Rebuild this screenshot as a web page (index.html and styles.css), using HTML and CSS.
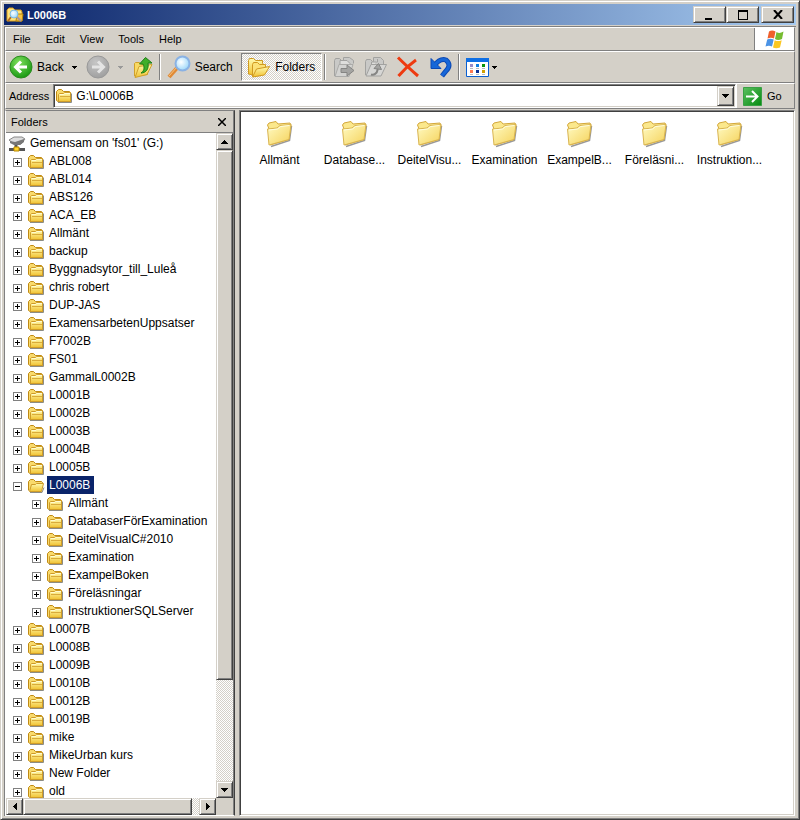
FILE: index.html
```html
<!DOCTYPE html>
<html lang="en">
<head>
    <meta charset="UTF-8">
    <meta name="viewport" content="width=device-width, initial-scale=1.0">
    <title>L0006B</title>
    <link rel="stylesheet" href="styles.css">
</head>
<body>
    <!-- Shared icons -->
    <svg class="defs" aria-hidden="true">
        <defs>
            <linearGradient id="gold" x1="0" y1="0" x2="0" y2="1">
                <stop offset="0" stop-color="#fffbb0"/>
                <stop offset="1" stop-color="#f1c232"/>
            </linearGradient>
            <linearGradient id="goldBig" x1="0" y1="0" x2="1" y2="1">
                <stop offset="0" stop-color="#fffbc4"/>
                <stop offset="1" stop-color="#f5d25a"/>
            </linearGradient>
            <radialGradient id="green" cx="0.4" cy="0.3" r="0.7">
                <stop offset="0" stop-color="#7fe05c"/>
                <stop offset="1" stop-color="#1b9a14"/>
            </radialGradient>
            <linearGradient id="goGreen" x1="0" y1="0" x2="1" y2="1">
                <stop offset="0" stop-color="#5cc060"/>
                <stop offset="1" stop-color="#068a10"/>
            </linearGradient>
            <radialGradient id="grey" cx="0.4" cy="0.3" r="0.7">
                <stop offset="0" stop-color="#c6c6c6"/>
                <stop offset="1" stop-color="#a0a0a0"/>
            </radialGradient>
            <radialGradient id="lens" cx="0.4" cy="0.4" r="0.6">
                <stop offset="0" stop-color="#ffffff"/>
                <stop offset="1" stop-color="#9ed8fa"/>
            </radialGradient>
        </defs>
        <symbol id="folder" viewBox="0 0 17 14">
            <path d="M2 13.500h13.500V4.500" fill="none" stroke="#8c8c84"/>
            <path d="M.5 11.500v-9l2-2h3l2 2h6l1 1v9h-12.500z" fill="#f9da6c" stroke="#c08a14"/>
            <path d="M2.500 12.500v-7l1-1h4l1-1h6v9z" fill="url(#gold)" stroke="#cf9c28"/>
            <path d="M4 7.500h10" stroke="#d9ab3a"/>
            <path d="M4 5.500h4l1-1h5" fill="none" stroke="#fffbd0"/>
        </symbol>
        <symbol id="open" viewBox="0 0 17 14">
            <path d="M2 13.500h12l2-5" fill="none" stroke="#8c8c84"/>
            <path d="M.5 11.500v-9l2-2h3l2 2h6l1 1v3" fill="#f9da6c" stroke="#c08a14"/>
            <path d="M1.500 12.500l2-7h4l1-1h7l-2 8z" fill="url(#gold)" stroke="#cf9c28"/>
        </symbol>
        <symbol id="bigFolder" viewBox="0 0 27 28">
            <path d="M5 26.500L23.500 20.500L25.500 6" fill="none" stroke="#999" stroke-width="1.500"/>
            <path d="M3 9L1.500 5L3 3L10 1.500L12 4L24 3L25 5L23 19.500L4 25z" fill="#fbe88d" stroke="#d3a73b"/>
            <path d="M1.500 9L11 8L14 5.500L25 4.500L23 19.500L3 25z" fill="url(#goldBig)" stroke="#d9b44f"/>
            <path d="M3 10L11.500 9L14.500 6.500L23.500 5.500" fill="none" stroke="#fffde0"/>
        </symbol>
        <symbol id="down" viewBox="0 0 7 4">
            <path d="M0 0h7v1h-1v1h-1v1h-1v1h-1v-1h-1v-1h-1v-1h-1z" fill="currentColor"/>
        </symbol>
        <symbol id="smallDown" viewBox="0 0 5 3">
            <path d="M0 0h5v1h-1v1h-1v1h-1v-1h-1v-1h-1z" fill="currentColor"/>
        </symbol>
        <symbol id="docArrow" viewBox="0 0 22 22">
            <path d="M1.500 20V4.500l1-2h4l2 2h2V1.500h6l4 3v3" fill="#c9c9c7" stroke="#a2a2a0"/>
            <path d="M7 14V4.500h7l3 3V14" fill="#dededc" stroke="#a2a2a0"/>
            <path d="M2 20.500L6 8.500h14l-4 12z" fill="#d3d3d1" stroke="#ababa9"/>
            <path d="M8 12.500h6V9l7 5.500-7 5.500v-3.500H8z" fill="#a4a4a2" stroke="#858583"/>
        </symbol>
        <symbol id="docCopy" viewBox="0 0 24 22">
            <path d="M1.500 19V5.500l1-2h4l2 2h1V1.500h7l3 3v4" fill="#c9c9c7" stroke="#a2a2a0"/>
            <path d="M7.500 14v-8h6V3" fill="#dededc" stroke="#a2a2a0"/>
            <path d="M2 20L7 8.500h15.500L17 20z" fill="#d6d6d4" stroke="#a2a2a0"/>
            <path d="M7 18.500c3 1 6-1 6.500-4.500l.5-3" fill="none" stroke="#858583" stroke-width="2"/>
            <path d="M10 12.500l4.500-5 3 6z" fill="#a4a4a2" stroke="#858583"/>
        </symbol>
    </svg>

    <header class="title-bar">
        <svg class="title-icon" viewBox="0 0 18 16"><path d="M1 14V3l2-2h4l2 2h6l1 2v9z" fill="#ffe37a" stroke="#d69b1c"/><path d="M10 14l1-7h6l-1 7z" fill="#f8c543" stroke="#b8860b"/><path d="M5 10l-3 4" stroke="#b56c20" stroke-width="2"/><circle cx="8" cy="7" r="4" fill="url(#lens)" stroke="#7eb9e2"/><path d="M11 10l4 4" stroke="#a99" stroke-width="2"/></svg>
        <h1>L0006B</h1>
        <div class="window-buttons">
            <button type="button" class="raised" aria-label="Minimize"><svg width="11" height="10"><path d="M1 8h7v2H1z"/></svg></button>
            <button type="button" class="raised" aria-label="Maximize"><svg width="10" height="10"><path d="M0 0h10v10H0zM1 2v7h8V2z" fill-rule="evenodd"/></svg></button>
            <button type="button" class="raised close" aria-label="Close"><svg width="10" height="9"><path d="M1 0l8 9M9 0L1 9" stroke="#000" stroke-width="2"/></svg></button>
        </div>
    </header>

    <div class="frame">
        <nav class="menu-bar">
            <button type="button">File</button>
            <button type="button">Edit</button>
            <button type="button">View</button>
            <button type="button">Tools</button>
            <button type="button">Help</button>
            <div class="flag">
                <svg width="20" height="19" viewBox="0 0 20 19">
                    <path d="M4 1.500q3-2 6.500 0L9 8.500q-3-1.500-6.500 0z" fill="#f0602c"/>
                    <path d="M11.500 2q3 2 7-.5L17 9q-4 2-7 0z" fill="#76bc31"/>
                    <path d="M2.200 9.500q3-1.500 6.500 0L7 16.500q-3-1.500-6.500 0z" fill="#4b93e6"/>
                    <path d="M9.700 10.200q3 1.800 7 0L15 17.500q-4 1.500-7 0z" fill="#fbc722"/>
                </svg>
            </div>
        </nav>

        <div class="toolbar">
            <button type="button" class="tool back">
                <svg width="24" height="24" viewBox="0 0 24 24"><circle cx="12" cy="12" r="11" fill="url(#green)" stroke="#2c8a20"/><path d="M18 12H7M12 6.500L6.500 12l5.500 5.500" fill="none" stroke="#fff" stroke-width="3"/></svg>
                Back
                <svg class="arrow" width="5" height="3"><use href="#smallDown"/></svg>
            </button>
            <button type="button" class="tool forward" aria-label="Forward" disabled>
                <svg width="24" height="24" viewBox="0 0 24 24"><circle cx="12" cy="12" r="11" fill="url(#grey)" stroke="#999"/><path d="M6 12h11M12 6.500l5.500 5.500-5.500 5.500" fill="none" stroke="#e4e4e4" stroke-width="3"/></svg>
                <svg class="arrow" width="5" height="3"><use href="#smallDown"/></svg>
            </button>
            <button type="button" class="tool up" aria-label="Up">
                <svg width="20" height="24" viewBox="0 0 20 24"><path d="M1.500 21V8.500l1-1h4l2 2h6v10z" fill="#f9d965" stroke="#d0a02a"/><path d="M2 22.500l4-11 13-2-5 10z" fill="url(#gold)" stroke="#d0a02a"/><path d="M8 18c3-2 4-5 2-9H6.500L12.500 2.500 19 8h-4c1 6-2 10-7 10z" fill="#3fae2a" stroke="#1c7f16"/></svg>
            </button>
            <span class="divider"></span>
            <button type="button" class="tool search">
                <svg width="24" height="24" viewBox="0 0 24 24"><path d="M2 22l8-9" stroke="#e08a35" stroke-width="4"/><path d="M2 21l8-9" stroke="#f8c27c" stroke-width="1"/><circle cx="15.500" cy="8.500" r="7" fill="url(#lens)" stroke="#8ab2e4" stroke-width="2"/></svg>
                Search
            </button>
            <button type="button" class="tool folders" aria-pressed="true">
                <svg width="24" height="22" viewBox="0 0 24 22"><path d="M1.500 18V4.500l1-2h4l2 2h7v3L6 19z" fill="url(#gold)" stroke="#d09a20"/><path d="M5.500 20V8.500l1-2h4l2 2h6v3l-4 8z" fill="#fbe278" stroke="#d09a20"/><path d="M5.500 21l4-8 13-2.500-5 8.500z" fill="url(#gold)" stroke="#d09a20"/></svg>
                Folders
            </button>
            <span class="divider"></span>
            <button type="button" class="tool icon" aria-label="Move to" disabled><svg width="22" height="22"><use href="#docArrow"/></svg></button>
            <button type="button" class="tool icon" aria-label="Copy to" disabled><svg width="24" height="22"><use href="#docCopy"/></svg></button>
            <button type="button" class="tool icon" aria-label="Delete"><svg width="24" height="22" viewBox="0 0 24 22"><path d="M2 1.500q8 8 20 18.500M20 4Q10 11 2.500 20" fill="none" stroke="#ee3a10" stroke-width="3"/></svg></button>
            <button type="button" class="tool icon" aria-label="Undo"><svg width="24" height="22" viewBox="0 0 24 22"><path d="M6 10Q12 2 18 4Q24 9 18 15L14 20" fill="none" stroke="#0c49b4" stroke-width="5"/><path d="M3 2.500v10h10l-2.500-2.500-5-5z" fill="#1767d8" stroke="#0c49b4"/><path d="M6 10Q12 2 18 4Q24 9 18 15L14 19.500" fill="none" stroke="#1767d8" stroke-width="3"/></svg></button>
            <span class="divider"></span>
            <button type="button" class="tool views" aria-label="Views">
                <svg width="23" height="19" viewBox="0 0 23 19"><path d="M.5.5h22v18H.5z" fill="#fff" stroke="#0a5fd0"/><path d="M0 0h23v4H0z" fill="#0f6fe4"/><path d="M4 6h3v3H4z" fill="#9a8cc8"/><path d="M10 6h3v3h-3z" fill="#1180e0"/><path d="M16 6h3v3h-3z" fill="#0a930a"/><path d="M4 12h3v3H4z" fill="#ff7850"/><path d="M10 12h3v3h-3z" fill="#0b2f94"/><path d="M16 12h3v3h-3z" fill="#d3a000"/><path d="M4 10.500h3M10 10.500h3M16 10.500h3M4 16.500h3M10 16.500h3M16 16.500h3" stroke="#bbb"/></svg>
                <svg class="arrow" width="5" height="3"><use href="#smallDown"/></svg>
            </button>
        </div>

        <form class="address-bar">
            <label for="address">Address</label>
            <div class="combo">
                <svg width="17" height="14"><use href="#folder"/></svg>
                <input type="text" id="address" value="G:\L0006B">
                <button type="button" class="raised" aria-label="Show addresses"><svg width="7" height="4"><use href="#down"/></svg></button>
            </div>
            <button type="button" class="go">
                <svg width="19" height="19" viewBox="0 0 19 19"><path d="M.5.5h18v18H.5z" fill="url(#goGreen)" stroke="#3aa045"/><path d="M3 9.500h11M9 4l5.500 5.500L9 15" fill="none" stroke="#fff" stroke-width="2"/></svg>
                Go
            </button>
        </form>

        <main class="panes">
            <section class="sidebar">
                <div class="sidebar-title">
                    <h2>Folders</h2>
                    <button type="button" aria-label="Close folders"><svg width="8" height="8"><path d="M0 0l8 8M8 0L0 8" stroke="#000" stroke-width="1.500"/></svg></button>
                </div>
                <div class="tree-area">
                    <ul class="tree">
                        <li class="root"><svg viewBox="0 0 18 16"><path d="M1 4l5-3h8l3 2-4 5H6z" fill="#ddd" stroke="#888"/><path d="M2 5l5 1 9-3v3l-4 3H6L2 7z" fill="#777"/><path d="M8 9v3M1 13.500h16" stroke="#555" stroke-width="3"/><path d="M6 11h5v4H6z" fill="#ffd42a" stroke="#b98800"/></svg><span>Gemensam on 'fs01' (G:)</span></li>
                        <li><button type="button" class="plus" aria-label="Expand"></button><svg><use href="#folder"/></svg><span>ABL008</span></li>
                        <li><button type="button" class="plus" aria-label="Expand"></button><svg><use href="#folder"/></svg><span>ABL014</span></li>
                        <li><button type="button" class="plus" aria-label="Expand"></button><svg><use href="#folder"/></svg><span>ABS126</span></li>
                        <li><button type="button" class="plus" aria-label="Expand"></button><svg><use href="#folder"/></svg><span>ACA_EB</span></li>
                        <li><button type="button" class="plus" aria-label="Expand"></button><svg><use href="#folder"/></svg><span>Allmänt</span></li>
                        <li><button type="button" class="plus" aria-label="Expand"></button><svg><use href="#folder"/></svg><span>backup</span></li>
                        <li><button type="button" class="plus" aria-label="Expand"></button><svg><use href="#folder"/></svg><span>Byggnadsytor_till_Luleå</span></li>
                        <li><button type="button" class="plus" aria-label="Expand"></button><svg><use href="#folder"/></svg><span>chris robert</span></li>
                        <li><button type="button" class="plus" aria-label="Expand"></button><svg><use href="#folder"/></svg><span>DUP-JAS</span></li>
                        <li><button type="button" class="plus" aria-label="Expand"></button><svg><use href="#folder"/></svg><span>ExamensarbetenUppsatser</span></li>
                        <li><button type="button" class="plus" aria-label="Expand"></button><svg><use href="#folder"/></svg><span>F7002B</span></li>
                        <li><button type="button" class="plus" aria-label="Expand"></button><svg><use href="#folder"/></svg><span>FS01</span></li>
                        <li><button type="button" class="plus" aria-label="Expand"></button><svg><use href="#folder"/></svg><span>GammalL0002B</span></li>
                        <li><button type="button" class="plus" aria-label="Expand"></button><svg><use href="#folder"/></svg><span>L0001B</span></li>
                        <li><button type="button" class="plus" aria-label="Expand"></button><svg><use href="#folder"/></svg><span>L0002B</span></li>
                        <li><button type="button" class="plus" aria-label="Expand"></button><svg><use href="#folder"/></svg><span>L0003B</span></li>
                        <li><button type="button" class="plus" aria-label="Expand"></button><svg><use href="#folder"/></svg><span>L0004B</span></li>
                        <li><button type="button" class="plus" aria-label="Expand"></button><svg><use href="#folder"/></svg><span>L0005B</span></li>
                        <li><button type="button" class="minus" aria-label="Collapse"></button><svg><use href="#open"/></svg><span class="selected">L0006B</span></li>
                        <li class="child"><button type="button" class="plus" aria-label="Expand"></button><svg><use href="#folder"/></svg><span>Allmänt</span></li>
                        <li class="child"><button type="button" class="plus" aria-label="Expand"></button><svg><use href="#folder"/></svg><span>DatabaserFörExamination</span></li>
                        <li class="child"><button type="button" class="plus" aria-label="Expand"></button><svg><use href="#folder"/></svg><span>DeitelVisualC#2010</span></li>
                        <li class="child"><button type="button" class="plus" aria-label="Expand"></button><svg><use href="#folder"/></svg><span>Examination</span></li>
                        <li class="child"><button type="button" class="plus" aria-label="Expand"></button><svg><use href="#folder"/></svg><span>ExampelBoken</span></li>
                        <li class="child"><button type="button" class="plus" aria-label="Expand"></button><svg><use href="#folder"/></svg><span>Föreläsningar</span></li>
                        <li class="child"><button type="button" class="plus" aria-label="Expand"></button><svg><use href="#folder"/></svg><span>InstruktionerSQLServer</span></li>
                        <li><button type="button" class="plus" aria-label="Expand"></button><svg><use href="#folder"/></svg><span>L0007B</span></li>
                        <li><button type="button" class="plus" aria-label="Expand"></button><svg><use href="#folder"/></svg><span>L0008B</span></li>
                        <li><button type="button" class="plus" aria-label="Expand"></button><svg><use href="#folder"/></svg><span>L0009B</span></li>
                        <li><button type="button" class="plus" aria-label="Expand"></button><svg><use href="#folder"/></svg><span>L0010B</span></li>
                        <li><button type="button" class="plus" aria-label="Expand"></button><svg><use href="#folder"/></svg><span>L0012B</span></li>
                        <li><button type="button" class="plus" aria-label="Expand"></button><svg><use href="#folder"/></svg><span>L0019B</span></li>
                        <li><button type="button" class="plus" aria-label="Expand"></button><svg><use href="#folder"/></svg><span>mike</span></li>
                        <li><button type="button" class="plus" aria-label="Expand"></button><svg><use href="#folder"/></svg><span>MikeUrban kurs</span></li>
                        <li><button type="button" class="plus" aria-label="Expand"></button><svg><use href="#folder"/></svg><span>New Folder</span></li>
                        <li><button type="button" class="plus" aria-label="Expand"></button><svg><use href="#folder"/></svg><span>old</span></li>
                    </ul>
                    <div class="scroll vertical">
                        <button type="button" class="raised" aria-label="Scroll up"><svg width="7" height="4"><path d="M3 0h1v1h1v1h1v1h1v1H0V3h1V2h1V1h1z"/></svg></button>
                        <div class="track"><div class="thumb raised"></div></div>
                        <button type="button" class="raised" aria-label="Scroll down"><svg width="7" height="4"><use href="#down"/></svg></button>
                    </div>
                    <div class="scroll horizontal">
                        <button type="button" class="raised" aria-label="Scroll left"><svg width="4" height="7"><path d="M0 3h1V2h1V1h1V0h1v7H3V6H2V5H1V4H0z"/></svg></button>
                        <div class="track"><div class="thumb raised"></div></div>
                        <button type="button" class="raised" aria-label="Scroll right"><svg width="4" height="7"><path d="M4 3H3V2H2V1H1V0H0v7h1V6h1V5h1V4h1z"/></svg></button>
                    </div>
                </div>
            </section>

            <section class="files">
                <a href="#" class="file"><svg width="27" height="28"><use href="#bigFolder"/></svg>Allmänt</a>
                <a href="#" class="file"><svg width="27" height="28"><use href="#bigFolder"/></svg>Database...</a>
                <a href="#" class="file"><svg width="27" height="28"><use href="#bigFolder"/></svg>DeitelVisu...</a>
                <a href="#" class="file"><svg width="27" height="28"><use href="#bigFolder"/></svg>Examination</a>
                <a href="#" class="file"><svg width="27" height="28"><use href="#bigFolder"/></svg>ExampelB...</a>
                <a href="#" class="file"><svg width="27" height="28"><use href="#bigFolder"/></svg>Föreläsni...</a>
                <a href="#" class="file"><svg width="27" height="28"><use href="#bigFolder"/></svg>Instruktion...</a>
            </section>
        </main>
    </div>
</body>
</html>
```
FILE: styles.css
```css
* {
    box-sizing: border-box;
}
body {
    margin: 0;
    height: 100vh;
    padding: 3px;
    display: flex;
    flex-direction: column;
    overflow: hidden;
    font-family: "Liberation Sans", Arial, sans-serif;
    font-size: 12px;
    color: #000;
    background-color: #d4d0c8;
    border: 1px solid;
    border-color: #d4d0c8 #404040 #404040 #d4d0c8;
    box-shadow: inset 1px 1px #fff, inset -1px -1px #808080;
}
button {
    font: inherit;
    color: inherit;
    background: none;
    border: none;
    margin: 0;
    padding: 0;
    display: flex;
    align-items: center;
    justify-content: center;
}
svg {
    display: block;
    flex: none;
}
.defs {
    position: absolute;
    width: 0;
    height: 0;
}
.raised {
    background-color: #d4d0c8;
    border: 1px solid;
    border-color: #d4d0c8 #404040 #404040 #d4d0c8;
    box-shadow: inset 1px 1px #fff, inset -1px -1px #808080;
}

/* Title bar */
.title-bar {
    flex: none;
    height: 21px;
    padding: 0 2px;
    display: flex;
    align-items: center;
    color: #fff;
    background: linear-gradient(to right, #0a246a, #a6caf0);
}
.title-icon {
    width: 18px;
    height: 16px;
}
.title-bar h1 {
    flex: 1;
    margin: 0 0 0 3px;
    font-size: 11px;
}
.window-buttons {
    display: flex;
}
.window-buttons button {
    width: 33px;
    height: 17px;
}
.window-buttons .close {
    margin-left: 2px;
}

/* Menu and toolbars */
.frame {
    flex: 1;
    min-height: 0;
    margin-top: 1px;
    display: flex;
    flex-direction: column;
    border-top: 1px solid #808080;
    border-left: 1px solid #808080;
}
.menu-bar, .toolbar, .address-bar {
    flex: none;
    display: flex;
    align-items: center;
    border-top: 1px solid #fff;
    border-left: 1px solid #fff;
    border-right: 1px solid #808080;
    border-bottom: 1px solid #808080;
    margin-right: 1px;
}
.menu-bar {
    height: 24px;
    padding-left: 7px;
    gap: 15px;
    font-size: 11px;
}
.flag {
    width: 40px;
    align-self: stretch;
    margin-left: auto;
    display: flex;
    align-items: center;
    justify-content: center;
    background-color: #fff;
    border-left: 1px solid #808080;
}
.toolbar {
    height: 32px;
    padding-left: 3px;
}
.tool {
    height: 28px;
    gap: 4px;
}
.tool:disabled .arrow {
    color: #999;
}
.tool .arrow {
    margin-left: 4px;
}
.forward {
    margin-left: 9px;
}
.up {
    margin-left: 10px;
}
.search {
    margin-right: 8px;
}
.divider {
    width: 2px;
    height: 26px;
    margin: 0 6px;
    border-left: 1px solid #808080;
    border-right: 1px solid #fff;
}
.folders {
    width: 81px;
    border: 1px solid;
    border-color: #808080 #fff #fff #808080;
    background: repeating-conic-gradient(#fff 0 25%, #d4d0c8 0 50%) 0 0 / 2px 2px;
}
.folders + .divider {
    margin: 0 2px;
}
.icon {
    width: 32px;
}
.icon + .divider {
    margin: 0 6px 0 2px;
}
.views {
    gap: 0;
}
.views .arrow {
    margin-left: 3px;
}

/* Address bar */
.address-bar {
    height: 26px;
    padding-left: 3px;
    font-size: 11px;
}
.combo {
    flex: 1;
    height: 24px;
    margin-left: 4px;
    padding-left: 2px;
    display: flex;
    align-items: center;
    background-color: #fff;
    border: 1px solid;
    border-color: #808080 #fff #fff #808080;
    box-shadow: inset 1px 1px #404040, inset -1px -1px #d4d0c8;
}
.combo input {
    flex: 1;
    min-width: 0;
    margin-left: 3px;
    padding: 0;
    border: none;
    outline: none;
    font: inherit;
    font-size: 12px;
    background: none;
}
.combo button {
    width: 17px;
    height: 20px;
    margin-right: 1px;
}
.go {
    width: 58px;
    height: 24px;
    gap: 5px;
    padding: 0 11px 0 6px;
    justify-content: flex-start;
    border-left: 1px solid #fff;
}

/* Panes */
.panes {
    flex: 1;
    min-height: 0;
    margin-top: 1px;
    display: flex;
    gap: 4px;
}
.sidebar {
    width: 230px;
    flex: none;
    display: flex;
    flex-direction: column;
    border: 1px solid;
    border-color: #808080 #404040 #fff #fff;
    box-shadow: inset -1px 0 #808080;
    padding-right: 1px;
}
.sidebar-title {
    flex: none;
    height: 22px;
    display: flex;
    align-items: center;
    justify-content: space-between;
    padding: 0 7px 0 5px;
    border-bottom: 1px solid #808080;
}
.sidebar-title h2 {
    margin: 0;
    font-size: 11px;
    font-weight: normal;
}
.tree-area {
    flex: 1;
    min-height: 0;
    display: grid;
    grid-template-columns: 1fr 17px;
    grid-template-rows: 1fr 17px;
    background-color: #d4d0c8;
}
.tree {
    margin: 0;
    padding: 1px 0 0;
    list-style: none;
    overflow: hidden;
    background-color: #fff;
}
.tree li {
    height: 18px;
    padding-left: 7px;
    display: flex;
    align-items: center;
    white-space: nowrap;
}
.tree .root {
    padding-left: 2px;
}
.tree .child {
    padding-left: 26px;
}
.tree li svg {
    width: 17px;
    height: 14px;
    margin-top: 2px;
}
.tree .root svg {
    width: 18px;
    height: 16px;
}
.tree span {
    margin-left: 2px;
    padding: 0 2px;
    line-height: 18px;
}
.tree .selected {
    color: #fff;
    background-color: #0a246a;
    padding-right: 4px;
}
.plus, .minus {
    width: 9px;
    height: 9px;
    margin: 2px 6px 0 0;
    border: 1px solid #808080;
    background: linear-gradient(#000, #000) center / 5px 1px no-repeat;
}
.plus {
    background: linear-gradient(#000, #000) center / 5px 1px no-repeat, linear-gradient(#000, #000) center / 1px 5px no-repeat;
}
.scroll {
    display: flex;
}
.scroll button {
    flex: none;
    width: 17px;
    height: 17px;
}
.vertical {
    flex-direction: column;
}
.track {
    flex: 1;
    background: repeating-conic-gradient(#fff 0 25%, #d4d0c8 0 50%) 0 0 / 2px 2px;
}
.vertical .thumb {
    height: 84%;
}
.horizontal .thumb {
    width: 96%;
    height: 100%;
}
.files {
    flex: 1;
    display: flex;
    flex-wrap: wrap;
    align-content: flex-start;
    padding: 9px 0 0 2px;
    margin-right: 1px;
    background-color: #fff;
    border: 1px solid;
    border-color: #808080 #fff #fff #808080;
    box-shadow: inset 1px 1px #404040, inset -1px -1px #d4d0c8;
}
.file {
    width: 75px;
    display: flex;
    flex-direction: column;
    align-items: center;
    gap: 5px;
    color: #000;
    text-decoration: none;
    white-space: nowrap;
}
```
